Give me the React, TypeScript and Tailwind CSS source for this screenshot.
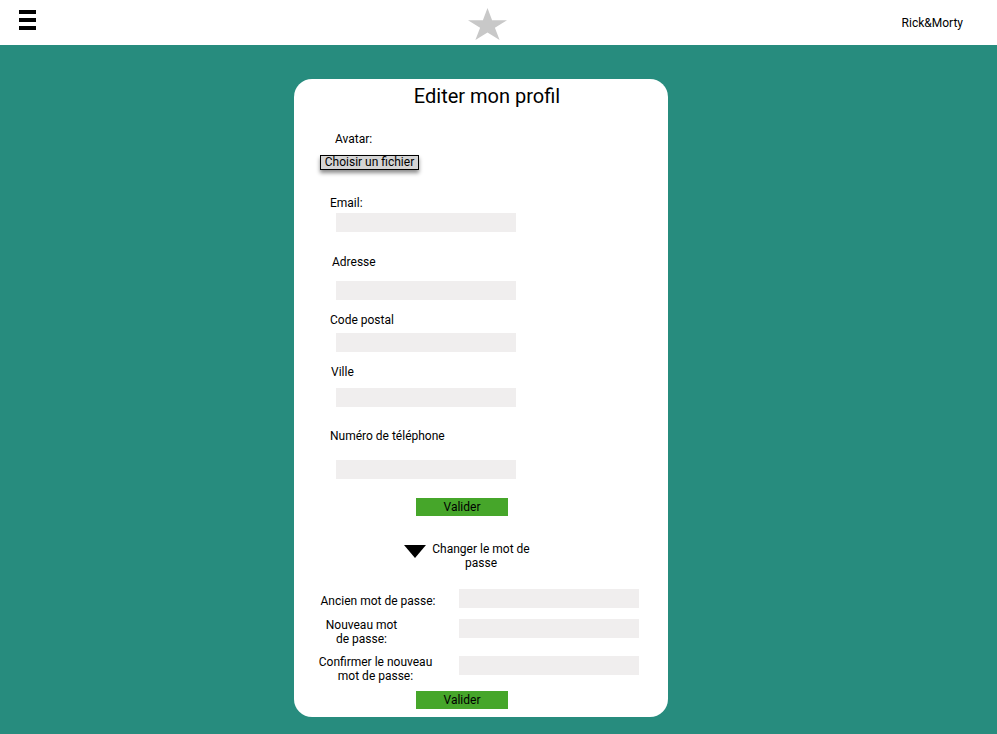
export default function App() {
  const font = { fontFamily: "Roboto, 'Liberation Sans', sans-serif" };

  return (
    <div style={font} className="min-h-screen w-full bg-[#278c7e] text-black">
      <header className="flex h-[45px] items-center bg-white">
        <div className="ml-[19px] flex flex-col gap-[4px] self-start pt-[10px]">
          <span className="block h-[4px] w-[17px] bg-black" />
          <span className="block h-[4px] w-[17px] bg-black" />
          <span className="block h-[4px] w-[17px] bg-black" />
        </div>
        <svg className="ml-[432px] mt-[2px]" width="39" height="32" viewBox="0 0 39 32">
          <polygon
            fill="#c8c8c8"
            points="19.5,0 24.1,12.2 39,12.2 26.9,19.8 31.6,32 19.5,24.5 7.4,32 12.1,19.8 0,12.2 14.9,12.2"
          />
        </svg>
        <span className="ml-auto pr-[34px] text-[12px] leading-[14px]">Rick&amp;Morty</span>
      </header>

      <main className="pt-[34px]">
        <div className="ml-[294px] h-[638px] w-[374px] rounded-[18px] bg-white pt-[5px]">
          <h1 className="pl-[12px] text-center text-[20px] leading-[24px]">Editer mon profil</h1>

          <div className="ml-[41px] mt-[24px] text-[12px] leading-[14px]">Avatar:</div>
          <button className="ml-[26px] mt-[9px] block h-[15px] w-[99px] border border-black bg-[#d4d4d4] text-[12px] leading-[13px] shadow-[0_3px_4px_rgba(0,0,0,0.45)]">
            Choisir un fichier
          </button>

          <Field label="Email:" labelMt="mt-[26px]" labelMl="ml-[36px]" inputMt="mt-[3px]" />
          <Field label="Adresse" labelMt="mt-[23px]" labelMl="ml-[38px]" inputMt="mt-[12px]" />
          <Field label="Code postal" labelMt="mt-[13px]" labelMl="ml-[36px]" inputMt="mt-[6px]" />
          <Field label="Ville" labelMt="mt-[13px]" labelMl="ml-[37px]" inputMt="mt-[9px]" />
          <Field label="Numéro de téléphone" labelMt="mt-[22px]" labelMl="ml-[36px]" inputMt="mt-[17px]" />

          <button className="ml-[122px] mt-[19px] block h-[18px] w-[92px] bg-[#46a62a] text-[12px] leading-[18px]">
            Valider
          </button>

          <div className="ml-[110px] mt-[26px] flex items-start">
            <svg className="mt-[3px]" width="22" height="13" viewBox="0 0 22 13">
              <polygon points="0,0 22,0 11,13" fill="#000" />
            </svg>
            <div className="ml-[6px] w-[98px] text-center text-[12px] leading-[14px]">
              Changer le mot de
              <br />
              passe
            </div>
          </div>

          <div className="mt-[19px] grid grid-cols-[165px_180px] items-start text-[12px] leading-[14px]">
            <div className="mt-[5px] pl-[3px] text-center">Ancien mot de passe:</div>
            <div className="h-[19px] bg-[#f0eeee]" />
          </div>
          <div className="mt-[10px] grid grid-cols-[165px_180px] items-start text-[12px] leading-[14px]">
            <div className="pr-[30px] text-center">
              Nouveau mot
              <br />
              de passe:
            </div>
            <div className="mt-[1px] h-[19px] bg-[#f0eeee]" />
          </div>
          <div className="mt-[9px] grid grid-cols-[165px_180px] items-start text-[12px] leading-[14px]">
            <div className="pr-[2px] text-center">
              Confirmer le nouveau
              <br />
              mot de passe:
            </div>
            <div className="mt-[1px] h-[19px] bg-[#f0eeee]" />
          </div>

          <button className="ml-[122px] mt-[8px] block h-[18px] w-[92px] bg-[#46a62a] text-[12px] leading-[18px]">
            Valider
          </button>
        </div>
      </main>
    </div>
  );
}

function Field({
  label,
  labelMt,
  labelMl,
  inputMt,
}: {
  label: string;
  labelMt: string;
  labelMl: string;
  inputMt: string;
}) {
  return (
    <>
      <div className={`${labelMt} ${labelMl} text-[12px] leading-[14px]`}>{label}</div>
      <div className={`${inputMt} ml-[42px] h-[19px] w-[180px] bg-[#f0eeee]`} />
    </>
  );
}
